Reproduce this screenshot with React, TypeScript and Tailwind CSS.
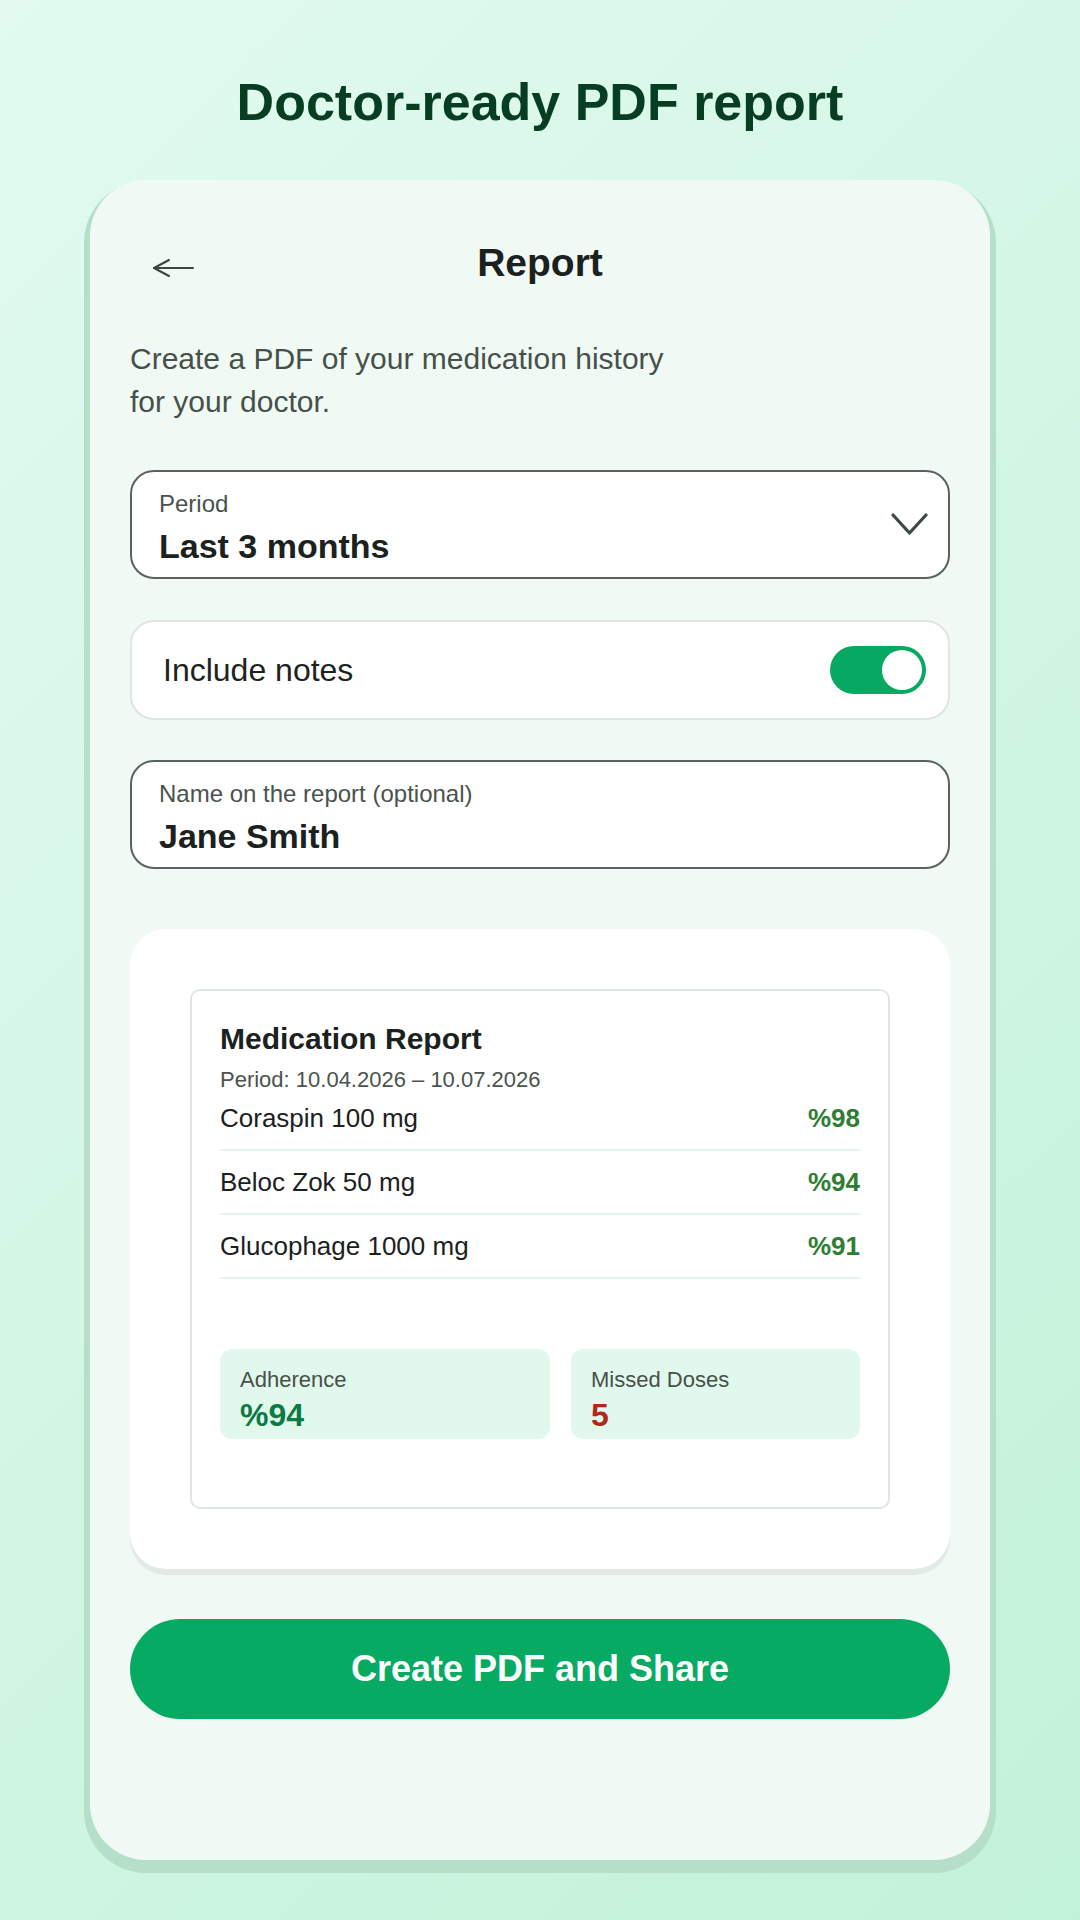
import { useState } from 'react';

interface MedRow {
  name: string;
  adherence: string;
}

const rows: MedRow[] = [
  { name: 'Coraspin 100 mg', adherence: '%98' },
  { name: 'Beloc Zok 50 mg', adherence: '%94' },
  { name: 'Glucophage 1000 mg', adherence: '%91' },
];

function BackArrow() {
  return (
    <svg width="42" height="20" viewBox="0 0 42 20" fill="none" stroke="#3b4640" strokeWidth="2" strokeLinecap="round">
      <path d="M2 10 H41" />
      <path d="M2 10 L17 2" />
      <path d="M2 10 L17 18" />
    </svg>
  );
}

function Chevron() {
  return (
    <svg width="37" height="23" viewBox="0 0 37 23" fill="none" stroke="#3f4944" strokeWidth="3.2" strokeLinecap="round" strokeLinejoin="round">
      <path d="M2 2 L18.5 20 L35 2" />
    </svg>
  );
}

function Toggle({ on, onToggle }: { on: boolean; onToggle: () => void }) {
  return (
    <button
      onClick={onToggle}
      className={`relative w-[96px] h-[48px] rounded-full ${on ? 'bg-[#07a862]' : 'bg-[#c9d3ce]'}`}
    >
      <span
        className={`absolute top-[4px] w-[40px] h-[40px] rounded-full bg-white ${on ? 'right-[4px]' : 'left-[4px]'}`}
      />
    </button>
  );
}

function Field({ label, value, chevron }: { label: string; value: string; chevron?: boolean }) {
  return (
    <div className="flex items-start justify-between h-[109px] rounded-[24px] border-2 border-[#5b635f] bg-white pl-[27px] pr-[20px]">
      <div className="pt-[18px]">
        <div className="text-[24px] leading-[28px] text-[#4a524e]">{label}</div>
        <div className="mt-[8px] text-[34px] leading-[40px] font-bold text-[#1b211e]">{value}</div>
      </div>
      {chevron && (
        <div className="self-center">
          <Chevron />
        </div>
      )}
    </div>
  );
}

export default function App() {
  const [includeNotes, setIncludeNotes] = useState(true);

  return (
    <div className="min-h-[1920px] w-full flex flex-col items-center bg-[linear-gradient(135deg,#e2faf0_0%,#c2f2d9_100%)] font-['Liberation_Sans',Arial,sans-serif]">
      <h1 className="pt-[72px] text-[52px] leading-[60px] font-bold text-[#073d23]">Doctor-ready PDF report</h1>

      <div className="mt-[48px] w-[900px] h-[1680px] rounded-[56px] bg-[#f0f9f4] shadow-[0_7px_0_6px_#b5dfc9] px-10 pt-[59px]">
        <div className="grid grid-cols-[1fr_auto_1fr] items-center h-[48px]">
          <div className="pl-[22px] pt-[10px]">
            <BackArrow />
          </div>
          <div className="text-[39px] leading-[48px] font-bold text-[#1b211e]">Report</div>
          <div />
        </div>

        <p className="mt-[50px] text-[30px] leading-[43px] text-[#46504a]">
          Create a PDF of your medication history
          <br />
          for your doctor.
        </p>

        <div className="mt-[47px]">
          <Field label="Period" value="Last 3 months" chevron />
        </div>

        <div className="mt-[41px] flex items-center justify-between h-[100px] rounded-[24px] border-2 border-[#dfe6e2] bg-white pl-[31px] pr-[22px]">
          <span className="text-[32px] leading-[38px] text-[#1d2420]">Include notes</span>
          <Toggle on={includeNotes} onToggle={() => setIncludeNotes(!includeNotes)} />
        </div>

        <div className="mt-[40px]">
          <Field label="Name on the report (optional)" value="Jane Smith" />
        </div>

        <div className="mt-[60px] rounded-[36px] bg-white p-[60px] shadow-[0_6px_0_#e2eae5]">
          <div className="rounded-[10px] border-2 border-[#dfe7e3] px-[28px] pt-[30px] pb-[68px]">
            <div className="text-[30px] leading-[36px] font-bold text-[#1b211e]">Medication Report</div>
            <div className="mt-[10px] text-[22px] leading-[26px] text-[#4b534f]">Period: 10.04.2026 – 10.07.2026</div>
            <div className="flex flex-col">
              {rows.map(row => (
                <div
                  key={row.name}
                  className="flex items-center justify-between pt-4 pb-4 first:pt-[10px] border-b-2 border-[#e8f3ee] text-[26px] leading-[30px]"
                >
                  <span className="text-[#1b211e]">{row.name}</span>
                  <span className="font-bold text-[#2e7d32]">{row.adherence}</span>
                </div>
              ))}
            </div>

            <div className="mt-[70px] flex gap-[21px]">
              <div className="w-[330px] h-[90px] rounded-[12px] bg-[#e1f8ec] pl-5 pt-[18px]">
                <div className="text-[22px] leading-[26px] text-[#47504b]">Adherence</div>
                <div className="mt-[4px] text-[32px] leading-[36px] font-bold text-[#0b7a45]">%94</div>
              </div>
              <div className="flex-1 h-[90px] rounded-[12px] bg-[#e1f8ec] pl-5 pt-[18px]">
                <div className="text-[22px] leading-[26px] text-[#47504b]">Missed Doses</div>
                <div className="mt-[4px] text-[32px] leading-[36px] font-bold text-[#b3261e]">5</div>
              </div>
            </div>
          </div>
        </div>

        <button className="mt-[50px] w-full h-[100px] rounded-full bg-[#07aa62] text-white text-[36px] font-bold flex items-center justify-center">
          Create PDF and Share
        </button>
      </div>
    </div>
  );
}
